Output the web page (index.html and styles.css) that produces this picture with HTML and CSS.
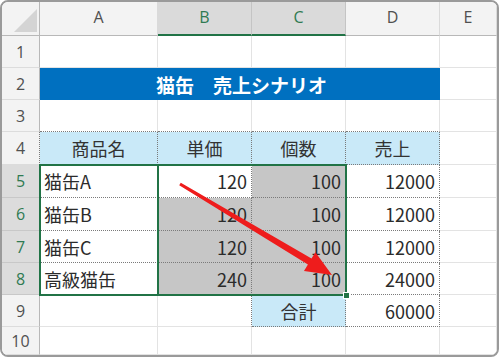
FILE: index.html
```html
<!DOCTYPE html>
<html lang="ja">
<head>
<meta charset="utf-8">
<link rel="stylesheet" href="styles.css">
</head>
<body>
<div class="frame">
  <div class="sheet">
    <div class="ch corner"><span class="tri"></span></div>
    <div class="ch">A</div>
    <div class="ch chs">B</div>
    <div class="ch chs">C</div>
    <div class="ch">D</div>
    <div class="ch">E</div>

    <div class="rh">1</div><div class="c"></div><div class="c"></div><div class="c"></div><div class="c"></div><div class="c"></div>

    <div class="rh">2</div><div class="title">猫缶　売上シナリオ</div><div class="c"></div>

    <div class="rh">3</div><div class="c db"></div><div class="c db"></div><div class="c db"></div><div class="c db"></div><div class="c"></div>

    <div class="rh rhd">4</div><div class="c t th">商品名</div><div class="c t th">単価</div><div class="c t th">個数</div><div class="c t th">売上</div><div class="c"></div>

    <div class="rh rhs">5</div><div class="c t tx">猫缶A</div><div class="c t num">120</div><div class="c t num g">100</div><div class="c t num">12000</div><div class="c"></div>

    <div class="rh rhs">6</div><div class="c t tx">猫缶B</div><div class="c t num g">120</div><div class="c t num g">100</div><div class="c t num">12000</div><div class="c"></div>

    <div class="rh rhs">7</div><div class="c t tx">猫缶C</div><div class="c t num g">120</div><div class="c t num g">100</div><div class="c t num">12000</div><div class="c"></div>

    <div class="rh rhs">8</div><div class="c t tx">高級猫缶</div><div class="c t num g">240</div><div class="c t num g">100</div><div class="c t num">24000</div><div class="c"></div>

    <div class="rh">9</div><div class="c"></div><div class="c dr"></div><div class="c t th">合計</div><div class="c t num">60000</div><div class="c"></div>

    <div class="rh">10</div><div class="c"></div><div class="c"></div><div class="c"></div><div class="c"></div><div class="c"></div>

    <div class="selbox"><span class="handle"></span></div>
    <div class="sela"></div>

    <svg class="arrow" width="495" height="353" viewBox="0 0 495 353">
      <polygon fill="#ee1c1c" points="178.8,180.7 309.5,256.6 313.4,250.2 330,273 302.0,269.0 305.9,262.6 177.2,183.3"/>
    </svg>
  </div>
</div>
</body>
</html>
```

FILE: styles.css
```css
* { box-sizing: border-box; }
html, body { margin: 0; padding: 0; background: #fff; }
body { width: 500px; height: 359px; overflow: hidden; }

.frame {
  width: 499px;
  height: 357px;
  border: 2px solid #9a9a9a;
  border-radius: 8px;
  overflow: hidden;
  background: #fff;
}

.sheet {
  position: relative;
  display: grid;
  grid-template-columns: 38px 118px 94px 94px 94px 57px;
  grid-template-rows: 34px 32px 32px 32px 33px 33px 33px 32px 32px 32px 28px;
  font-family: "Noto Sans CJK JP", "Noto Sans", sans-serif;
  color: #2b2b2b;
}

.ch {
  background: #f3f3f3;
  border-right: 1px solid #dadada;
  border-bottom: 1px solid #b8b8b8;
  font-family: "Open Sans", "Noto Sans", sans-serif;
  font-size: 16px;
  color: #505050;
  display: flex;
  align-items: center;
  justify-content: center;
  padding-bottom: 3px;
}
.chs {
  background: #dadada;
  color: #2f7a52;
  border-bottom: 2px solid #217346;
  border-right-color: #c4c4c4;
}
.corner { position: relative; border-right: 1px solid #b8b8b8; }
.tri {
  position: absolute;
  right: 2px;
  bottom: 3px;
  width: 0;
  height: 0;
  border-left: 23px solid transparent;
  border-bottom: 23px solid #d4d4d4;
}

.rh {
  background: #f3f3f3;
  border-right: 1px solid #b8b8b8;
  border-bottom: 1px solid #dcdcdc;
  font-family: "Open Sans", "Noto Sans", sans-serif;
  font-size: 16px;
  color: #505050;
  display: flex;
  align-items: center;
  justify-content: center;
}
.rhs { background: #dcdcdc; color: #2f7a52; border-bottom-color: #c8c8c8; }
.rhd { border-right: 1px dotted #7a7a7a; }

.c {
  border-right: 1px solid #e3e3e3;
  border-bottom: 1px solid #e3e3e3;
  font-size: 18px;
  display: flex;
  align-items: center;
  white-space: nowrap;
}
.db { border-bottom: 1px dotted #7a7a7a; }
.dr { border-right: 1px dotted #7a7a7a; }
.t {
  border-right: 1px dotted #7a7a7a;
  border-bottom: 1px dotted #7a7a7a;
}
.th { background: #c9e9f8; justify-content: center; color: #333; }
.tx { padding-left: 4px; }
.num { justify-content: flex-end; padding-right: 4px; }
.g { background: #c6c6c6; }

.title {
  grid-column: span 4;
  background: #0070c0;
  color: #fff;
  font-weight: bold;
  font-size: 19px;
  display: flex;
  align-items: center;
  justify-content: center;
  padding-left: 3px;
}

.selbox {
  position: absolute;
  grid-column: 2 / 5;
  grid-row: 6 / 10;
  top: -1px;
  left: -1px;
  right: -1px;
  bottom: -1px;
  border: 2px solid #217346;
  pointer-events: none;
}
.handle {
  position: absolute;
  right: -5px;
  bottom: -5px;
  width: 7px;
  height: 7px;
  background: #217346;
  border: 1px solid #fff;
}
.sela {
  position: absolute;
  grid-column: 2 / 3;
  grid-row: 6 / 10;
  top: 0;
  bottom: 0;
  right: -1px;
  width: 2px;
  background: #217346;
}

.arrow {
  position: absolute;
  left: 0;
  top: 0;
  pointer-events: none;
}
```
